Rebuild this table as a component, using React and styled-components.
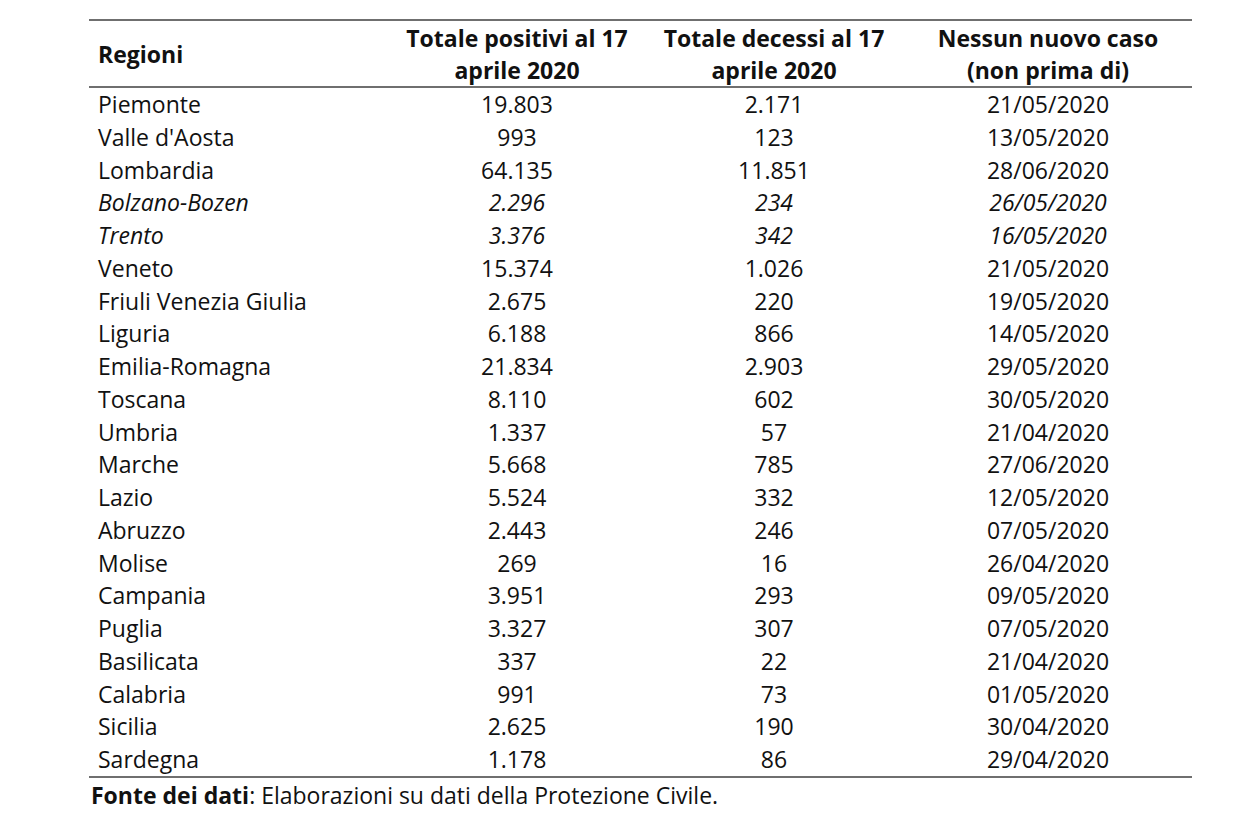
import React from 'react';
import styled, { createGlobalStyle } from 'styled-components';

const GlobalStyle = createGlobalStyle`
  body {
    margin: 0;
    background: #ffffff;
    font-family: "Open Sans", "Noto Sans", sans-serif;
    color: #111111;
  }
`;

const Page = styled.div`
  padding: 19px 0 0 89px;
`;

const Table = styled.div`
  width: 1103px;
  border-top: 2px solid #6f6f6f;
  border-bottom: 2px solid #6f6f6f;
`;

const Grid = styled.div`
  display: grid;
  grid-template-columns: 301px 254px 260px 288px;
  align-items: center;
`;

const Header = styled(Grid)`
  height: 65px;
  border-bottom: 2px solid #6f6f6f;
  font-weight: 700;
  font-size: 23px;
  line-height: 32px;
`;

const HeadCell = styled.div`
  text-align: ${({ $left }) => ($left ? 'left' : 'center')};
  padding-left: ${({ $left }) => ($left ? '9px' : '0')};
  padding-top: 1px;
`;

const Row = styled(Grid)`
  height: 32.75px;
  font-size: 23px;
  line-height: 32.75px;
  font-style: ${({ $italic }) => ($italic ? 'italic' : 'normal')};
`;

const Cell = styled.div`
  text-align: ${({ $left }) => ($left ? 'left' : 'center')};
  padding-left: ${({ $left }) => ($left ? '9px' : '0')};
  white-space: nowrap;
`;

const Footer = styled.div`
  padding: 1px 0 0 2px;
  font-size: 23px;
  line-height: 32px;
`;

const rows = [
  ['Piemonte', '19.803', '2.171', '21/05/2020'],
  ["Valle d'Aosta", '993', '123', '13/05/2020'],
  ['Lombardia', '64.135', '11.851', '28/06/2020'],
  ['Bolzano-Bozen', '2.296', '234', '26/05/2020', true],
  ['Trento', '3.376', '342', '16/05/2020', true],
  ['Veneto', '15.374', '1.026', '21/05/2020'],
  ['Friuli Venezia Giulia', '2.675', '220', '19/05/2020'],
  ['Liguria', '6.188', '866', '14/05/2020'],
  ['Emilia-Romagna', '21.834', '2.903', '29/05/2020'],
  ['Toscana', '8.110', '602', '30/05/2020'],
  ['Umbria', '1.337', '57', '21/04/2020'],
  ['Marche', '5.668', '785', '27/06/2020'],
  ['Lazio', '5.524', '332', '12/05/2020'],
  ['Abruzzo', '2.443', '246', '07/05/2020'],
  ['Molise', '269', '16', '26/04/2020'],
  ['Campania', '3.951', '293', '09/05/2020'],
  ['Puglia', '3.327', '307', '07/05/2020'],
  ['Basilicata', '337', '22', '21/04/2020'],
  ['Calabria', '991', '73', '01/05/2020'],
  ['Sicilia', '2.625', '190', '30/04/2020'],
  ['Sardegna', '1.178', '86', '29/04/2020'],
];

const App = () => {
  return (
    <Page>
      <GlobalStyle />
      <Table>
        <Header>
          <HeadCell $left>Regioni</HeadCell>
          <HeadCell>Totale positivi al 17<br />aprile 2020</HeadCell>
          <HeadCell>Totale decessi al 17<br />aprile 2020</HeadCell>
          <HeadCell>Nessun nuovo caso<br />(non prima di)</HeadCell>
        </Header>
        {rows.map(([name, pos, dec, date, italic]) => (
          <Row key={name} $italic={italic}>
            <Cell $left>{name}</Cell>
            <Cell>{pos}</Cell>
            <Cell>{dec}</Cell>
            <Cell>{date}</Cell>
          </Row>
        ))}
      </Table>
      <Footer>
        <b>Fonte dei dati</b>: Elaborazioni su dati della Protezione Civile.
      </Footer>
    </Page>
  );
};

export default App;
